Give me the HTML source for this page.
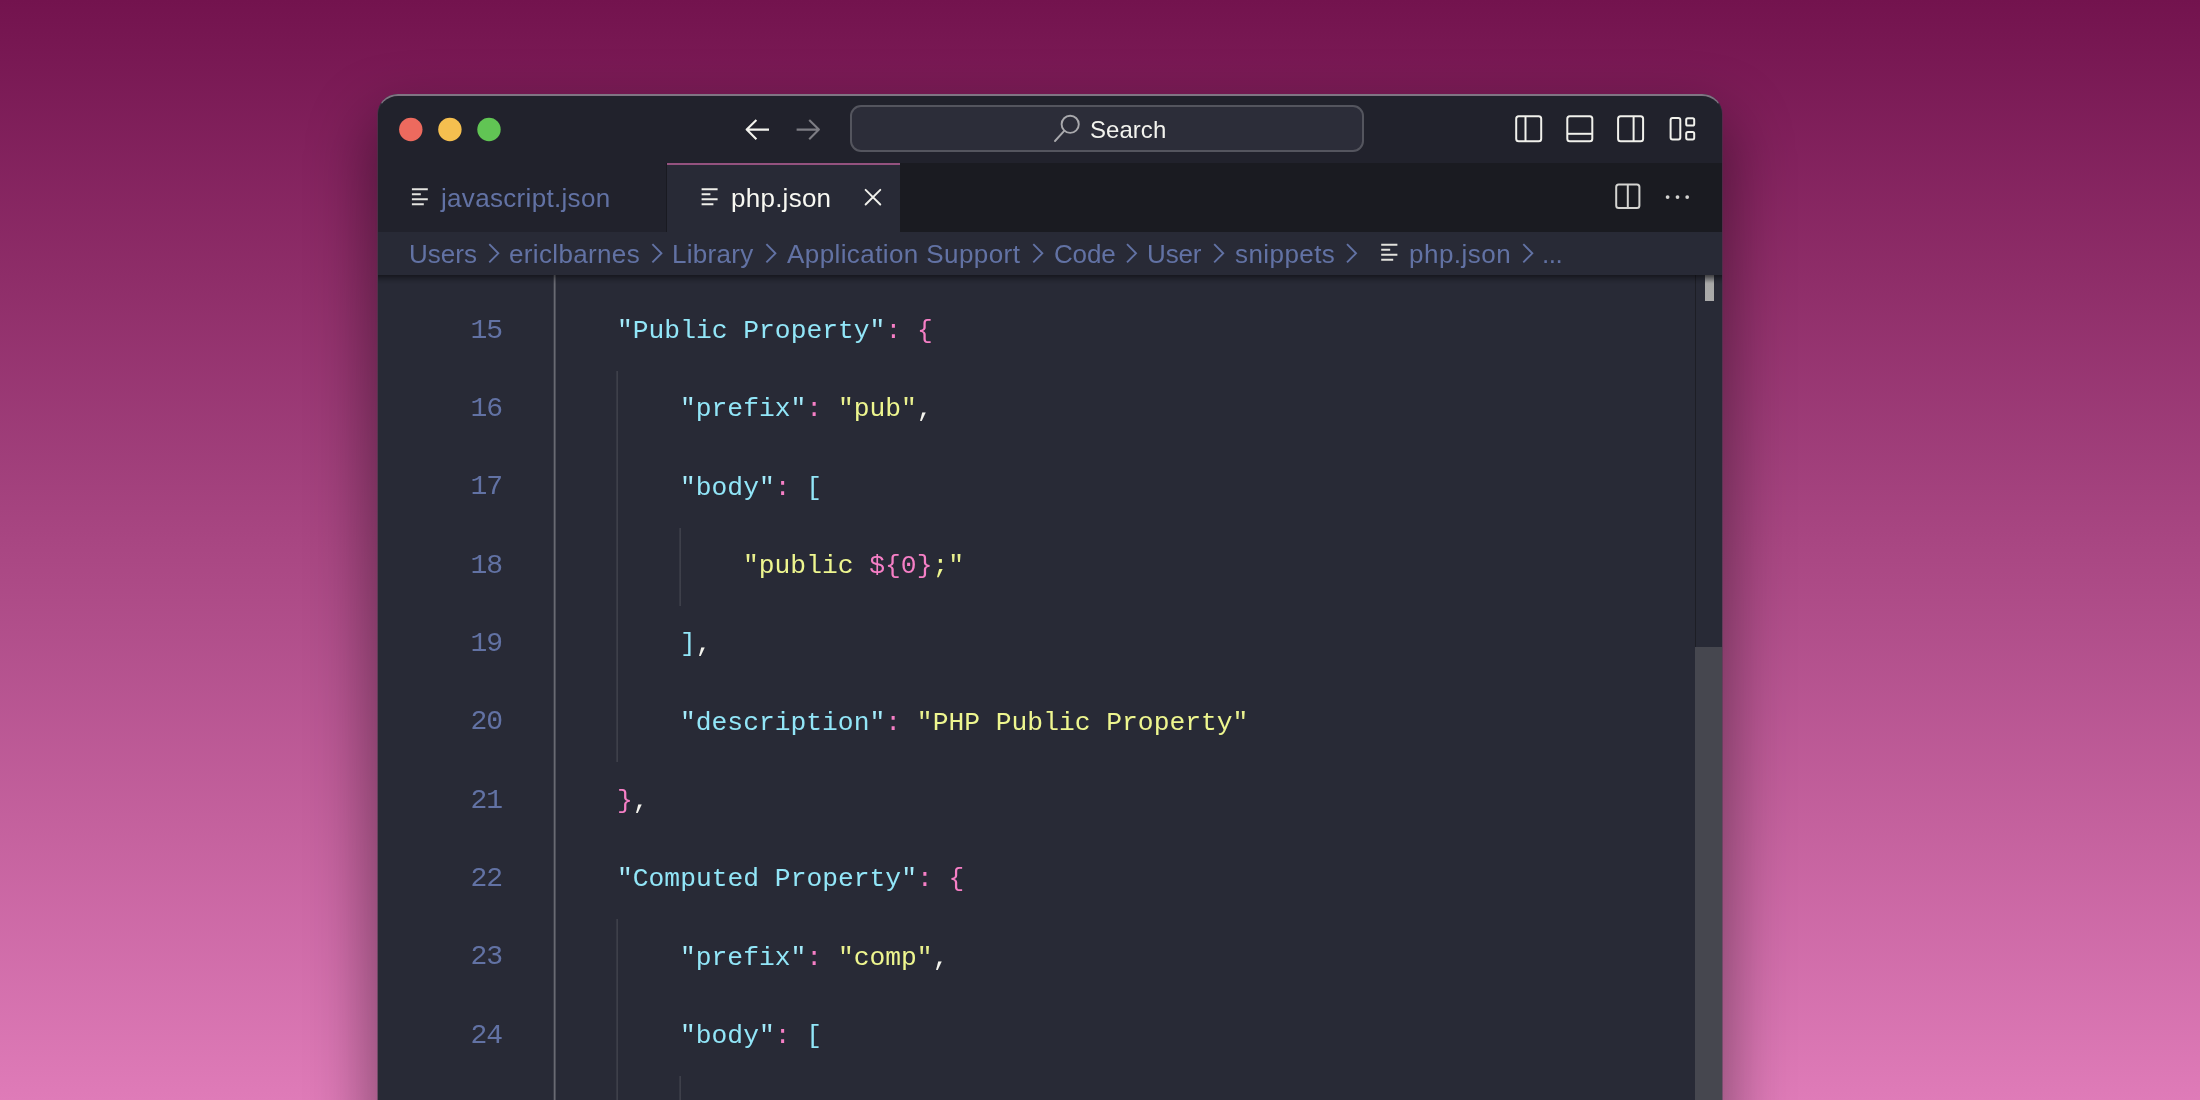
<!DOCTYPE html>
<html lang="en">
<head>
<meta charset="utf-8">
<title>php.json — snippets — Visual Studio Code</title>
<style>
*{box-sizing:border-box;margin:0;padding:0}
html,body{width:2200px;height:1100px;overflow:hidden}
body{position:relative;background:linear-gradient(180deg,#73134e 0%,#df7bb8 100%);font-family:"Liberation Sans",sans-serif;color:#f8f8f2}
.abs,.t,.ln,.cl,.g{position:absolute}
#shadow{left:378px;top:95px;width:1344px;height:1100px;border-radius:20px;box-shadow:0 30px 60px 10px rgba(0,0,0,.38)}
#win{left:378px;top:94px;width:1344px;height:1100px;border-radius:20px;overflow:hidden;background:#282a36}
#rim{left:377px;top:94px;width:1346px;height:1100px;border-radius:21px;border-top:2px solid rgba(178,162,176,.66);border-left:1px solid rgba(58,62,72,.5);border-right:1px solid rgba(58,62,72,.42);pointer-events:none}
#titlebar{left:0;top:0;width:1344px;height:69px;background:#21222c}
#tabs{left:0;top:69px;width:1344px;height:68.5px;background:#1a1b21}
.tab{top:0;height:68.5px}
#tab1{left:0;width:289px;background:#21222c;border-right:1px solid #191a21}
#tab2{left:289px;width:233.3px;background:#282a36;border-top:2px solid #94527f}
#crumbs{left:0;top:137.5px;width:1344px;height:42.8px;background:#282a36;z-index:3}
#crumbshadow{left:0;top:181px;width:1344px;height:9px;background:linear-gradient(180deg,rgba(0,0,0,.42) 0,rgba(0,0,0,.36) 14%,rgba(0,0,0,.2) 40%,rgba(0,0,0,.07) 70%,rgba(0,0,0,0) 100%);z-index:3}
#editor{left:0;top:180.5px;width:1344px;height:920px;background:#282a36}
.t{white-space:nowrap;line-height:1;will-change:transform}
#search{left:471.5px;top:11px;width:514.5px;height:47px;border-radius:11px;border:2px solid #54555e;background:#2c2d39}
svg{position:absolute;overflow:visible}
.ln,.cl{white-space:pre;line-height:1;will-change:transform;letter-spacing:0.005px;font-family:"Liberation Mono", monospace;font-size:26.3px}
.ln{color:#6272a4;text-align:right;font-size:28px;letter-spacing:-1.015px}
.k{color:#92e6f8}.kq{color:#a2eafa}.s{color:#eef68f}.sq{color:#e9f08e}.p{color:#f67fc6}.w{color:#f4f4ee}.b1{color:#f67fc6}.b2{color:#92e6f8}
.g{width:2px;background:linear-gradient(90deg,rgba(255,255,255,.065) 0,rgba(255,255,255,.065) 50%,rgba(255,255,255,.1) 50%,rgba(255,255,255,.1) 100%)}
</style>
</head>
<body>
<div id="shadow" class="abs"></div>
<div id="win" class="abs">
<div id="editor" class="abs">
<div class="g" style="left:175px;top:0;height:920px;width:3px;background:linear-gradient(90deg,rgba(255,255,255,.09) 0,rgba(255,255,255,.09) 33.3%,rgba(255,255,255,.3) 33.3%,rgba(255,255,255,.3) 66.6%,rgba(255,255,255,.17) 66.6%,rgba(255,255,255,.17) 100%)"></div>
<div class="g" style="left:238px;top:96.33px;height:391.66px"></div>
<div class="g" style="left:301px;top:253.0px;height:78.33px"></div>
<div class="g" style="left:238px;top:644.66px;height:626.66px"></div>
<div class="g" style="left:301px;top:801.33px;height:470.0px"></div>
<div class="ln" style="left:63.5px;top:42.13px;width:60px">15</div>
<div class="cl" style="left:239.04px;top:43.44px"><span class="kq">"</span><span class="k">Public Property</span><span class="kq">"</span><span class="p">:</span> <span class="b1">{</span></div>
<div class="ln" style="left:63.5px;top:120.47px;width:60px">16</div>
<div class="cl" style="left:302.18px;top:121.77px"><span class="kq">"</span><span class="k">prefix</span><span class="kq">"</span><span class="p">:</span> <span class="sq">"</span><span class="s">pub</span><span class="sq">"</span><span class="w">,</span></div>
<div class="ln" style="left:63.5px;top:198.8px;width:60px">17</div>
<div class="cl" style="left:302.18px;top:200.1px"><span class="kq">"</span><span class="k">body</span><span class="kq">"</span><span class="p">:</span> <span class="b2">[</span></div>
<div class="ln" style="left:63.5px;top:277.13px;width:60px">18</div>
<div class="cl" style="left:365.32px;top:278.43px"><span class="sq">"</span><span class="s">public </span><span class="p">${0}</span><span class="s">;</span><span class="sq">"</span></div>
<div class="ln" style="left:63.5px;top:355.46px;width:60px">19</div>
<div class="cl" style="left:302.18px;top:356.77px"><span class="b2">]</span><span class="w">,</span></div>
<div class="ln" style="left:63.5px;top:433.8px;width:60px">20</div>
<div class="cl" style="left:302.18px;top:435.1px"><span class="kq">"</span><span class="k">description</span><span class="kq">"</span><span class="p">:</span> <span class="sq">"</span><span class="s">PHP Public Property</span><span class="sq">"</span></div>
<div class="ln" style="left:63.5px;top:512.13px;width:60px">21</div>
<div class="cl" style="left:239.04px;top:513.43px"><span class="b1">}</span><span class="w">,</span></div>
<div class="ln" style="left:63.5px;top:590.46px;width:60px">22</div>
<div class="cl" style="left:239.04px;top:591.77px"><span class="kq">"</span><span class="k">Computed Property</span><span class="kq">"</span><span class="p">:</span> <span class="b1">{</span></div>
<div class="ln" style="left:63.5px;top:668.8px;width:60px">23</div>
<div class="cl" style="left:302.18px;top:670.1px"><span class="kq">"</span><span class="k">prefix</span><span class="kq">"</span><span class="p">:</span> <span class="sq">"</span><span class="s">comp</span><span class="sq">"</span><span class="w">,</span></div>
<div class="ln" style="left:63.5px;top:747.13px;width:60px">24</div>
<div class="cl" style="left:302.18px;top:748.43px"><span class="kq">"</span><span class="k">body</span><span class="kq">"</span><span class="p">:</span> <span class="b2">[</span></div>
<div class="abs" style="left:1317px;top:0;width:1px;height:920px;background:#1d1e25"></div>
<div class="abs" style="left:1326.7px;top:0;width:9.5px;height:26.5px;background:linear-gradient(180deg,#6f6f74 0,#a8a8a8 30%,#aaaaaa 100%)"></div>
<div class="abs" style="left:1317.2px;top:372.0px;width:27.5px;height:600px;background:#46474f"></div>
</div>
<div id="titlebar" class="abs">
<svg class="lights" width="130" height="40" viewBox="0 0 130 40" style="left:0;top:15px"><circle cx="32.8" cy="20.5" r="11.7" fill="#ed6a5e"/><circle cx="71.9" cy="20.5" r="11.7" fill="#f5bf4f"/><circle cx="111" cy="20.5" r="11.7" fill="#61c554"/></svg>
<div id="search" class="abs"></div>
<div class="t" id="t_search" style="left:711.93px;top:23.88px;font-size:24px;letter-spacing:0.036px;color:#f3f3ee">Search</div>
</div>
<div id="tabs" class="abs">
<div id="tab1" class="abs tab"></div><div id="tab2" class="abs tab"></div>
<div class="t" id="t_tab0" style="left:62.57px;top:22.09px;font-size:26px;letter-spacing:0.315px;color:#6272a4">javascript.json</div>
<div class="t" id="t_tab1" style="left:353.09px;top:22.09px;font-size:26px;letter-spacing:0.253px;color:#f8f8f2">php.json</div>
</div>
<div id="crumbshadow" class="abs"></div>
<div id="crumbs" class="abs">
<div class="t" id="t_c0" style="left:30.5px;top:9.59px;font-size:26px;letter-spacing:0.0px;color:#6272a4">Users</div>
<div class="t" id="t_c1" style="left:131.49px;top:9.59px;font-size:26px;letter-spacing:0.351px;color:#6272a4">ericlbarnes</div>
<div class="t" id="t_c2" style="left:293.76px;top:9.59px;font-size:26px;letter-spacing:0.308px;color:#6272a4">Library</div>
<div class="t" id="t_c3" style="left:409.23px;top:9.59px;font-size:26px;letter-spacing:0.412px;color:#6272a4">Application Support</div>
<div class="t" id="t_c4" style="left:675.61px;top:9.59px;font-size:26px;letter-spacing:-0.169px;color:#6272a4">Code</div>
<div class="t" id="t_c5" style="left:768.9px;top:9.59px;font-size:26px;letter-spacing:-0.124px;color:#6272a4">User</div>
<div class="t" id="t_c6" style="left:856.89px;top:9.59px;font-size:26px;letter-spacing:0.43px;color:#6272a4">snippets</div>
<div class="t" id="t_c7" style="left:1031.2px;top:9.59px;font-size:26px;letter-spacing:0.487px;color:#6272a4">php.json</div>
<div class="t" id="t_c8" style="left:1164.01px;top:9.59px;font-size:26px;letter-spacing:-0.454px;color:#6272a4">...</div>
</div>
</div>
<div id="rim" class="abs"></div>
<svg width="2200" height="1100" viewBox="0 0 2200 1100" style="left:0;top:0;z-index:10;pointer-events:none" fill="none" stroke-linecap="round" stroke-linejoin="round">
<!-- nav arrows -->
<g stroke="#f4f4ef" stroke-width="2.1" stroke-linecap="butt"><path d="M769 129.6H747M756.4 119.9L746.7 129.6L756.4 139.3"/></g>
<g stroke="#7d7d84" stroke-width="2.1" stroke-linecap="butt"><path d="M796.6 129.6H818.6M809.2 119.9L818.9 129.6L809.2 139.3"/></g>
<!-- search icon -->
<g stroke="#a9a9ad" stroke-width="1.9"><circle cx="1070.2" cy="124.3" r="8.6"/><path d="M1064.2 130.8L1055 141"/></g>
<!-- layout icons -->
<g stroke="#f1f1ec" stroke-width="2">
<rect x="1516.2" y="116.3" width="25" height="25" rx="2.5"/><path stroke-linecap="butt" d="M1525.5 116.3V141.3"/>
<rect x="1567.3" y="116.3" width="25" height="25" rx="2.5"/><path stroke-linecap="butt" d="M1567.3 133.8H1592.3"/>
<rect x="1618.1" y="116.3" width="25" height="25" rx="2.5"/><path stroke-linecap="butt" d="M1633.6 116.3V141.3"/>
<rect x="1670.6" y="118" width="9.7" height="21.6" rx="2"/><rect x="1686.2" y="118.3" width="8" height="7.2" rx="1.6"/><rect x="1686.2" y="132" width="8" height="7.4" rx="1.6"/>
</g>
<!-- editor actions -->
<g stroke="#d4d4d1" stroke-width="2"><rect x="1616.2" y="184.5" width="23.2" height="23.4" rx="2.5"/><path stroke-linecap="butt" d="M1627.8 184.5V207.9"/></g>
<g fill="#d4d4d1" stroke="none"><circle cx="1667.6" cy="197.1" r="1.9"/><circle cx="1677.5" cy="197.1" r="1.9"/><circle cx="1687.2" cy="197.1" r="1.9"/></g>
<!-- close x -->
<g stroke="#f1f1ec" stroke-width="1.9"><path d="M865.6 189.8L880.3 204.5M880.3 189.8L865.6 204.5"/></g>
<!-- file icons -->
<g stroke="#e4e4df" stroke-width="1.9" stroke-linecap="butt">
<path d="M411.9 189.3H427.8M411.9 194.2H420.8M411.9 199.2H427.8M411.9 204.3H423.8"/>
</g>
<g stroke="#eeeee9" stroke-width="1.9" stroke-linecap="butt">
<path d="M701.6 189.3H717.6M701.6 194.2H710.4M701.6 199.2H717.6M701.6 204.3H713.4"/>
</g>
<g stroke="#e2e2dd" stroke-width="1.9" stroke-linecap="butt">
<path d="M1381.2 244.8H1397.4M1381.2 249.8H1390.2M1381.2 254.8H1397.4M1381.2 259.8H1393.2"/>
</g>
<!-- breadcrumb chevrons -->
<g stroke="#6272a4" stroke-width="1.9" stroke-linecap="butt" stroke-linejoin="miter">
<path d="M489.3 244.2L498.3 253.3L489.3 262.4"/>
<path d="M652.4 244.2L661.4 253.3L652.4 262.4"/>
<path d="M766.4 244.2L775.4 253.3L766.4 262.4"/>
<path d="M1033.3 244.2L1042.3 253.3L1033.3 262.4"/>
<path d="M1127 244.2L1136 253.3L1127 262.4"/>
<path d="M1214.2 244.2L1223.2 253.3L1214.2 262.4"/>
<path d="M1347 244.2L1356 253.3L1347 262.4"/>
<path d="M1523.3 244.2L1532.3 253.3L1523.3 262.4"/>
</g>
</svg>

</body>
</html>
